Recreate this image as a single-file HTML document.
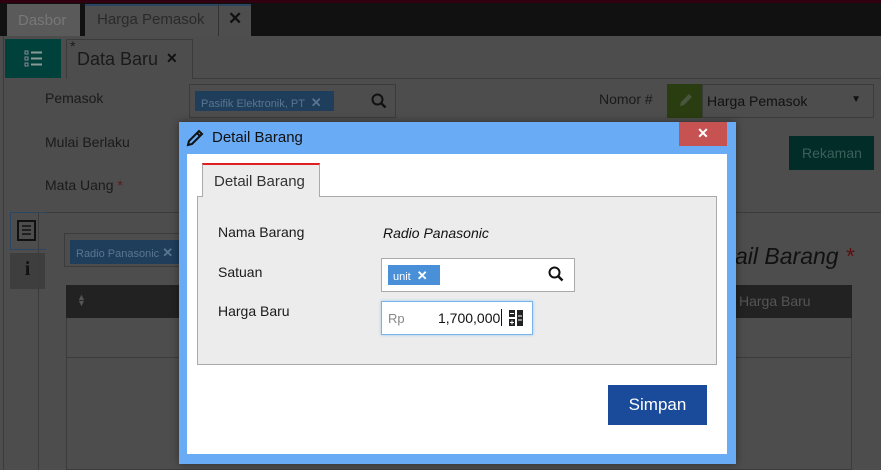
<!DOCTYPE html>
<html><head><meta charset="utf-8"><style>
*{box-sizing:border-box;margin:0;padding:0}
body{width:881px;height:470px;overflow:hidden;background:#4d4d4d;font-family:"Liberation Sans",sans-serif;position:relative}
.a{position:absolute}
.t{font-size:14px;color:#1a1a1a}
</style></head><body>
<div class="a" style="left:0;top:0;width:881px;height:36px;background:#111"></div>
<div class="a" style="left:0;top:0;width:881px;height:3px;background:#300010"></div>
<div class="a" style="left:7px;top:4px;width:73px;height:32px;background:#5a5a5a;color:#777;font-size:15px;padding:8px 0 0 11px">Dasbor</div>
<div class="a" style="left:85px;top:4px;width:166px;height:32px;background:#4e4e4e;border-top:2px solid #2a4660"></div>
<div class="a" style="left:97px;top:11px;color:#2a2a2a;font-size:15px">Harga Pemasok</div>
<div class="a" style="left:218px;top:4px;width:1px;height:32px;background:#333"></div>
<div class="a" style="left:228px;top:9px;color:#111;font-size:17px;font-weight:bold">✕</div>
<div class="a" style="left:3px;top:36px;width:1px;height:434px;background:#3a3a3a"></div>
<div class="a" style="left:5px;top:39px;width:56px;height:39px;background:#00413b"></div>
<svg class="a" style="left:24px;top:50px" width="19" height="18"><g fill="#667" stroke="#889" stroke-width="1"><rect x="1" y="1" width="3" height="3" fill="none"/><rect x="1" y="7" width="3" height="3" fill="none"/><rect x="1" y="13" width="3" height="3" fill="none"/></g><g fill="#8a9a98"><rect x="7" y="1.5" width="11" height="2"/><rect x="7" y="7.5" width="11" height="2"/><rect x="7" y="13.5" width="11" height="2"/></g></svg>
<div class="a" style="left:66px;top:39px;width:127px;height:40px;border:1px solid #3b3b3b;border-bottom:none;background:#4d4d4d"></div>
<div class="a" style="left:70px;top:38px;font-size:14px;color:#1a1a1a">*</div>
<div class="a" style="left:77px;top:49px;font-size:18px;color:#1a1a1a">Data Baru</div>
<div class="a" style="left:166px;top:50px;font-size:14px;color:#111;font-weight:bold">✕</div>
<div class="a" style="left:193px;top:78px;width:688px;height:1px;background:#3b3b3b"></div>
<div class="a t" style="left:45px;top:90px">Pemasok</div>
<div class="a t" style="left:45px;top:134px">Mulai Berlaku</div>
<div class="a t" style="left:45px;top:177px">Mata Uang <span style="color:#5a1a1a">*</span></div>
<div class="a" style="left:189px;top:84px;width:207px;height:34px;border:1px solid #3b3b3b"></div>
<div class="a" style="left:195px;top:91px;width:139px;height:20px;background:#1f3e5c;color:#5a7590;font-size:11px;padding:4px 0 0 6px">Pasifik Elektronik, PT <b style="font-size:13px;margin-left:3px">✕</b></div>
<svg class="a" style="left:371px;top:93px" width="16" height="16"><circle cx="6.5" cy="6.5" r="5" stroke="#111" stroke-width="2" fill="none"/><line x1="10" y1="10" x2="14.5" y2="14.5" stroke="#111" stroke-width="2.5"/></svg>
<div class="a t" style="left:599px;top:91px">Nomor #</div>
<div class="a" style="left:667px;top:84px;width:35px;height:34px;background:#2a3d10"></div>
<svg class="a" style="left:678px;top:93px" width="15" height="15"><path d="M2 13 L3 9 L11 1 L14 4 L6 12 Z" fill="#4a5540"/></svg>
<div class="a" style="left:702px;top:84px;width:172px;height:34px;border:1px solid #3b3b3b;font-size:14px;color:#111;padding:8px 0 0 4px">Harga Pemasok<span style="position:absolute;right:12px;top:9px;font-size:10px">▼</span></div>
<div class="a" style="left:789px;top:136px;width:85px;height:34px;background:#012c28;color:#3d5f5c;font-size:14px;padding:9px 0 0 13px">Rekaman</div>
<div class="a" style="left:10px;top:212px;width:871px;height:1px;background:#3b3b3b"></div>
<div class="a" style="left:10px;top:212px;width:36px;height:38px;border:1px solid #2a4660;border-right:none"></div>
<svg class="a" style="left:17px;top:220px" width="20" height="22"><rect x="1" y="1" width="17" height="19" fill="none" stroke="#111" stroke-width="2"/><g stroke="#111" stroke-width="1.5"><line x1="5" y1="6" x2="14" y2="6"/><line x1="5" y1="10" x2="14" y2="10"/><line x1="5" y1="14" x2="14" y2="14"/></g></svg>
<div class="a" style="left:10px;top:253px;width:35px;height:36px;background:#3e3e3e;color:#111;font-weight:bold;font-size:20px;font-family:'Liberation Serif',serif;text-align:center;padding-top:5px">i</div>
<div class="a" style="left:38px;top:212px;width:1px;height:258px;background:#3b3b3b"></div>
<div class="a" style="left:64px;top:233px;width:130px;height:34px;border:1px solid #3b3b3b"></div>
<div class="a" style="left:70px;top:240px;width:115px;height:24px;background:#1f3e5c;color:#5a7590;font-size:11px;padding:5px 0 0 6px">Radio Panasonic <b style="font-size:13px">✕</b></div>
<div class="a" style="left:735px;top:243px;font-size:23px;font-style:italic;color:#111">ail Barang <span style="color:#5a1010">*</span></div>
<div class="a" style="left:66px;top:285px;width:786px;height:33px;background:#222"></div>
<div class="a" style="left:77px;top:294px;color:#555;font-size:9px;line-height:6px">▲<br>▼</div>
<div class="a" style="left:739px;top:293px;color:#555;font-size:14px">Harga Baru</div>
<div class="a" style="left:66px;top:318px;width:786px;height:152px;border:1px solid #3b3b3b;border-top:none"></div>
<div class="a" style="left:66px;top:357px;width:786px;height:1px;background:#3b3b3b"></div>
<!-- modal -->
<div class="a" style="left:179px;top:122px;width:557px;height:342px;background:#6aabf5;box-shadow:0 0 8px rgba(0,0,0,.4)"></div>
<svg class="a" style="left:186px;top:129px" width="18" height="18"><path d="M2 16 L3 12 L13 2 L16 5 L6 15 Z M11 4 L14 7" fill="none" stroke="#111" stroke-width="2"/></svg>
<div class="a" style="left:212px;top:129px;font-size:15px;color:#111">Detail Barang</div>
<div class="a" style="left:679px;top:122px;width:48px;height:24px;background:#c75252;color:#fff;font-size:14px;font-weight:bold;text-align:center;padding-top:3px">✕</div>
<div class="a" style="left:187px;top:154px;width:540px;height:300px;background:#fff"></div>
<div class="a" style="left:197px;top:196px;width:520px;height:169px;background:#ececec;border:1px solid #aaa"></div>
<div class="a" style="left:202px;top:163px;width:118px;height:34px;background:#ececec;border:1px solid #aaa;border-top:2px solid #e02020;border-bottom:none;font-size:15px;color:#333;padding:8px 0 0 11px">Detail Barang</div>
<div class="a t" style="left:218px;top:224px">Nama Barang</div>
<div class="a" style="left:383px;top:225px;font-size:14px;font-style:italic;color:#111">Radio Panasonic</div>
<div class="a t" style="left:218px;top:264px">Satuan</div>
<div class="a" style="left:381px;top:258px;width:194px;height:34px;background:#fff;border:1px solid #aaa"></div>
<div class="a" style="left:388px;top:265px;width:52px;height:20px;background:#4a90d9;color:#fff;font-size:11px;padding:3px 0 0 5px">unit <b style="font-size:13px;margin-left:3px">✕</b></div>
<svg class="a" style="left:548px;top:266px" width="16" height="16"><circle cx="6.5" cy="6.5" r="5" stroke="#111" stroke-width="2" fill="none"/><line x1="10" y1="10" x2="14.5" y2="14.5" stroke="#111" stroke-width="2.5"/></svg>
<div class="a t" style="left:218px;top:303px">Harga Baru</div>
<div class="a" style="left:381px;top:301px;width:152px;height:34px;background:#fff;border:1px solid #7ab4ee;box-shadow:0 0 3px #9cc8f2"></div>
<div class="a" style="left:388px;top:311px;font-size:13px;color:#888">Rp</div>
<div class="a" style="left:438px;top:310px;font-size:14px;color:#111">1,700,000</div>
<div class="a" style="left:501px;top:309px;width:1px;height:17px;background:#111"></div>
<svg class="a" style="left:509px;top:310px" width="15" height="16"><rect x="0" y="0" width="6" height="7" fill="#222"/><rect x="8" y="0" width="6" height="16" fill="#222"/><rect x="0" y="9" width="6" height="7" fill="#222"/><g stroke="#fff" stroke-width="1"><line x1="1" y1="3.5" x2="5" y2="3.5"/><line x1="9" y1="6" x2="13" y2="6"/><line x1="9" y1="10" x2="13" y2="10"/><line x1="1" y1="12.5" x2="5" y2="12.5"/><line x1="3" y1="10.5" x2="3" y2="14.5"/></g></svg>
<div class="a" style="left:608px;top:385px;width:99px;height:40px;background:#1a4b9a;color:#fff;font-size:17px;text-align:center;padding-top:10px">Simpan</div>
</body></html>
